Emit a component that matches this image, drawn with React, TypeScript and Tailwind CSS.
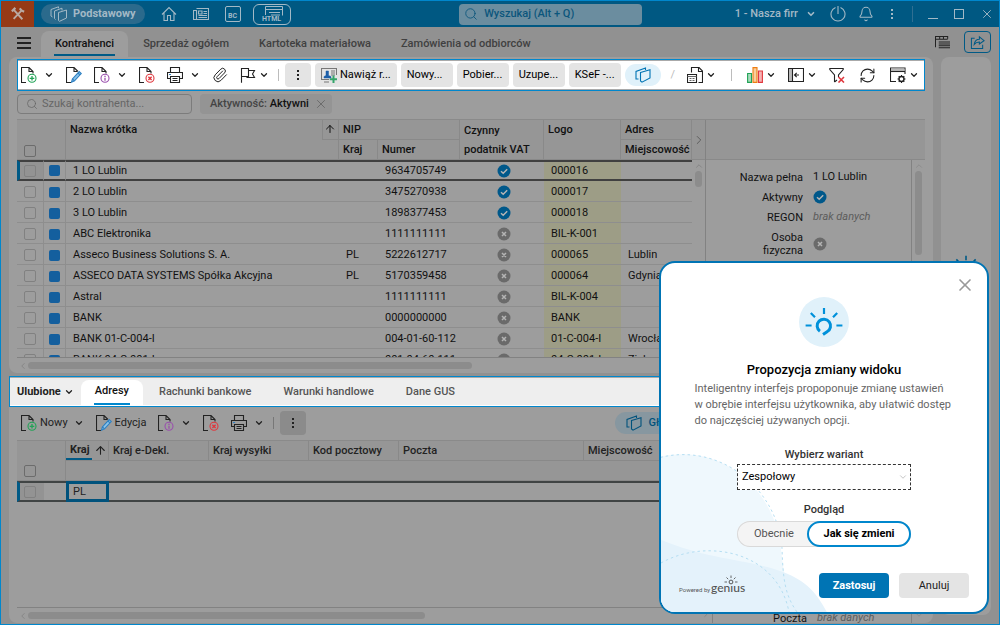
import { useState } from "react";
import type { ReactNode } from "react";
import {
  ArrowUp,
  Bell,
  ChevronDown,
  ChevronLeft,
  ChevronRight,
  ChevronUp,
  Paperclip,
  RefreshCw,
  Search,
  X,
} from "lucide-react";
import clsx from "clsx";

type Contractor = {
  name: string;
  country?: string;
  nip: string;
  vat: boolean;
  logo: string;
  city?: string;
};

const contractors: Contractor[] = [
  { name: "1 LO Lublin", nip: "9634705749", vat: true, logo: "000016" },
  { name: "2 LO Lublin", nip: "3475270938", vat: true, logo: "000017" },
  { name: "3 LO Lublin", nip: "1898377453", vat: true, logo: "000018" },
  { name: "ABC Elektronika", nip: "1111111111", vat: false, logo: "BIL-K-001" },
  { name: "Asseco Business Solutions S. A.", country: "PL", nip: "5222612717", vat: false, logo: "000065", city: "Lublin" },
  { name: "ASSECO DATA SYSTEMS Spółka Akcyjna", country: "PL", nip: "5170359458", vat: false, logo: "000064", city: "Gdynia" },
  { name: "Astral", nip: "1111111111", vat: false, logo: "BIL-K-004" },
  { name: "BANK", nip: "0000000000", vat: false, logo: "BANK" },
  { name: "BANK 01-C-004-I", nip: "004-01-60-112", vat: false, logo: "01-C-004-I", city: "Wrocław" },
  { name: "BANK 04-C-001-I", nip: "001-04-60-111", vat: false, logo: "04-C-001-I", city: "Zielona Góra" },
];

const mainTabs = ["Kontrahenci", "Sprzedaż ogółem", "Kartoteka materiałowa", "Zamówienia od odbiorców"];
const detailTabs = ["Adresy", "Rachunki bankowe", "Warunki handlowe", "Dane GUS"];

/* ---------- icons ---------- */

function Icon({ children, size = "size-4" }: { children: ReactNode; size?: string }) {
  return (
    <svg viewBox="0 0 16 16" className={clsx("shrink-0", size)} fill="none" stroke="currentColor" strokeWidth="1.1" aria-hidden="true">
      {children}
    </svg>
  );
}

const docOutline = "M5 15.5H.5V.5H8L12 4.5V6.5M8 .5V4.5H12";

function NewDocIcon() {
  return (
    <Icon>
      <path d={docOutline} />
      <g className="stroke-[#21a356]">
        <circle cx="11" cy="11.3" r="4" />
        <path d="M11 9V13.6M8.7 11.3H13.3" strokeWidth="1.3" />
      </g>
    </Icon>
  );
}

function EditIcon() {
  return (
    <Icon>
      <path d="M5 15.5H.5V.5H8L12 4.5M8 .5V4.5H11" />
      <path d="M5.5 15.2L6.4 12L13.2 4.6L15.3 6.5L8.5 13.9Z" className="fill-[#8cc4ea] stroke-[#2d7fc1]" />
      <path d="M6.4 12L8.5 13.9M11.9 6L14 7.9" className="stroke-[#2d7fc1]" />
    </Icon>
  );
}

function InfoDocIcon() {
  return (
    <Icon>
      <path d={docOutline} />
      <g className="stroke-[#9a4fae]">
        <circle cx="11" cy="11.3" r="4" />
        <path d="M11 10.7V13.7M11 8.8V9.9" strokeWidth="1.3" />
      </g>
    </Icon>
  );
}

function DeleteDocIcon() {
  return (
    <Icon>
      <path d={docOutline} />
      <g className="stroke-[#e0383e]">
        <circle cx="11" cy="11.3" r="4" />
        <path d="M9.4 9.7L12.6 12.9M12.6 9.7L9.4 12.9" strokeWidth="1.4" />
      </g>
    </Icon>
  );
}

function PrinterIcon() {
  return (
    <Icon>
      <path d="M3.5 5.5V.5H12.5V5.5M3.5 11.5H.5V5.5H15.5V11.5H12.5M3.5 9.5H12.5V15.5H3.5ZM5.5 11.5H10.5M5.5 13.5H10.5" />
      <path d="M2 7.5H4" className="stroke-[#2d7fc1]" />
    </Icon>
  );
}

function FlagIcon() {
  return (
    <Icon>
      <path d="M1.5 15.8V1.500H8.5V9.5H1.5M8.5 3.5H14.5L12.5 7L14.5 10.5H7V9.5" />
    </Icon>
  );
}

function ViewsIcon() {
  return (
    <Icon>
      <path d="M5.500 5.500L15 2.800V11L7 15.200L5.500 14Z" />
      <path d="M3.500 12H1V4.500L10.500 1V3" />
    </Icon>
  );
}

function StackIcon() {
  return (
    <svg viewBox="0 0 18 16" className="h-4 w-[18px]" fill="none" stroke="currentColor" aria-hidden="true">
      <path d="M8.5 6.500L16.500 4V12L9.500 15.300L8.500 14.500ZM5.500 13.500L4.500 12.500V5L12 2.200V4.500M2.500 11L1 10V3.500L8.500.8V2.300" />
    </svg>
  );
}

function ReportIcon() {
  return (
    <Icon>
      <path d="M4.500 5.500V.5H12L15.500 4V15.500H11.500M11.500 .5V4.500H15.500" />
      <path d="M.5 7.500H9.500V15.500H.5Z" />
      <path d="M.5 9.500H9.500M2.500 11.500H4.500M5.500 11.500H7.500M2.500 13.500H4.500M5.500 13.500H7.500" className="stroke-[#666]" />
    </Icon>
  );
}

function ChartIcon() {
  return (
    <Icon>
      <path d="M.6 6.500H4.500V15.400H.6Z" className="fill-[#a9dbbd] stroke-[#21a356]" />
      <path d="M6 .6H10V15.400H6Z" className="fill-[#f9cf9d] stroke-[#ee7d11]" />
      <path d="M11.500 4H15.400V15.400H11.500Z" className="fill-[#f6b3b5] stroke-[#e0383e]" />
    </Icon>
  );
}

function PanelIcon() {
  return (
    <Icon>
      <path d="M.5 1.500H15.500V14.500H.5Z" />
      <path d="M1 2H4V14H1Z" className="fill-[#bbb] stroke-none" />
      <path d="M4.500 1.500V14.500M6.500 8H11M8.700 5.800L6.500 8L8.700 10.200" />
    </Icon>
  );
}

function FilterOffIcon() {
  return (
    <Icon>
      <path d="M5.500 15V8L.8 2.500V1.500H14.200V2.500L9.500 8V10M5.500 15L8 13" />
      <path d="M9.500 10L15 15.500M15 10L9.500 15.500" className="stroke-[#e0383e]" strokeWidth="1.6" />
    </Icon>
  );
}

function WindowGearIcon() {
  return (
    <Icon>
      <path d="M6 14.500H.5V1H15V7" />
      <path d="M1 1.500H14.500V4H1Z" className="fill-[#bbb] stroke-none" />
      <path d="M.5 4.500H15" />
      <circle cx="11.5" cy="12" r="2.500" strokeWidth="1.4" />
      <path d="M11.500 8V9.500M11.500 14.500V16M7.500 12H9M14 12H15.500M8.700 9.200L9.700 10.200M13.300 13.800L14.300 14.800M14.300 9.200L13.300 10.200M9.700 13.800L8.700 14.800" />
    </Icon>
  );
}

function DotsIcon() {
  return (
    <svg viewBox="0 0 4 14" className="h-[14px] w-1" fill="currentColor" aria-hidden="true">
      <path d="M1 2H3V4H1ZM1 6H3V8H1ZM1 10H3V12H1Z" />
    </svg>
  );
}

function RelateIcon() {
  return (
    <Icon>
      <path d="M15.500 8V1.500H.5V12.500H8M3 15H8M10 4H14M10 6H14M10 8H14" className="stroke-[#777]" />
      <path d="M3 11V9.500L5 8.500V4H7.500V8.500L10 9.500V11Z" className="fill-[#1d5fa8] stroke-[#1d5fa8]" strokeWidth=".5" />
      <path d="M12.500 8.500V16M8.800 12.300H16" className="stroke-[#35a56b]" strokeWidth="2" />
    </Icon>
  );
}

function GeniusIcon({ className }: { className?: string }) {
  return (
    <svg viewBox="0 0 38 30" className={className} fill="none" stroke="currentColor" aria-hidden="true">
      <path d="M19 1V7M5.800 6L10 10.300M32.200 6L28 10.300M.6 18.500H6.600M31.400 18.500H37.400" strokeWidth="2.2" />
      <path d="M14.900 24.300A6.700 6.700 0 1 1 22 24.800L18 27.500" strokeWidth="3" />
    </svg>
  );
}

function StatusIcon({ ok }: { ok: boolean }) {
  return (
    <svg viewBox="0 0 14 14" className="inline-block size-[14px]" role="img" aria-label={ok ? "Tak" : "Nie"}>
      <circle cx="7" cy="7" r="6.5" className={ok ? "fill-[#00588a]" : "fill-[#6a6a6a]"} />
      <path
        d={ok ? "M4 7.200L6.200 9.300L10.200 5.200" : "M5 5L9 9M9 5L5 9"}
        fill="none"
        strokeWidth="1.5"
        className="stroke-[#b4b4b4]"
      />
    </svg>
  );
}

/* ---------- small parts ---------- */

type ToolProps = { label: string; icon: ReactNode; text?: string; split?: boolean; tight?: boolean };

function Tool({ label, icon, text, split, tight }: ToolProps) {
  return (
    <button
      type="button"
      aria-label={label}
      className={clsx(
        "flex h-6 shrink-0 items-center pl-[3px]",
        tight || text ? "gap-[3px]" : "gap-[7px]",
        split || text ? "pr-[9px]" : tight ? "pr-[11px]" : "pr-[9px]",
      )}
    >
      {icon}
      {text && <span>{text}</span>}
      {split && <ChevronDown className={clsx("size-[10px] shrink-0", text && "ml-[3px]")} strokeWidth={3} />}
    </button>
  );
}

function Divider() {
  return <span className="h-3 w-px shrink-0 bg-current opacity-30" />;
}

function ChipButton({ children, icon }: { children: ReactNode; icon?: ReactNode }) {
  return (
    <button type="button" className="flex h-6 min-w-[52px] shrink-0 items-center gap-[3px] rounded bg-[#e4e4e4] px-[6px] text-black">
      {icon}
      {children}
    </button>
  );
}

function Check({ label, dark }: { label: string; dark?: boolean }) {
  return (
    <input
      type="checkbox"
      aria-label={label}
      className={clsx("block size-3 appearance-none rounded-[2px] border", dark ? "border-[#6c6c6c]" : "border-[#818181]")}
    />
  );
}

function HorizontalScroll({ thumb }: { thumb: string }) {
  return (
    <div className="flex h-4 shrink-0 items-center border-t border-[#828282] pl-px text-[#828282]">
      <ChevronLeft className="size-[10px]" />
      <div className={clsx("h-[7px] rounded-full bg-[#8c8c8c]", thumb)} />
    </div>
  );
}

function Detail({ label, children }: { label: string; children: ReactNode }) {
  return (
    <div className="flex min-h-5 items-center gap-[10px]">
      <dt className="w-[74px] text-right leading-[13px]">{label}</dt>
      <dd className="flex items-center whitespace-nowrap">{children}</dd>
    </div>
  );
}

const th = "border-r border-b border-[#898989] bg-[#969696] pl-1 text-left font-medium whitespace-nowrap";

/* ---------- sections ---------- */

function TitleBar() {
  return (
    <header className="flex h-[26px] shrink-0 items-center bg-[#005882] text-[#a3b9c6]">
      <button type="button" aria-label="Narzędzia" className="flex h-full w-[33px] items-center justify-center bg-[#963a16] text-[#b9a9a2]">
        <Icon size="size-[14px]">
          <path d="M3 3L13 14M12.500 3.500L3 13.500" strokeWidth="2.2" />
          <path d="M1 5L5 1M10 1.500L12 4L15 5.500" strokeWidth="2.5" />
        </Icon>
      </button>
      <button type="button" className="ml-[7px] flex h-5 items-center gap-[5px] rounded-full bg-[#2b6a8c] px-[9px] text-[11px] font-bold">
        <StackIcon />
        Podstawowy
      </button>
      <nav className="ml-4 flex items-center gap-4">
        <button type="button" aria-label="Start">
          <Icon>
            <path d="M1 8.500L8 1.500L15 8.500M3 7V14.500H6.500V9.500H9.500V14.500H13V7" />
          </Icon>
        </button>
        <button type="button" aria-label="Aktualności">
          <Icon>
            <path d="M3.500 2.500H15.500V13.500H.5V4.500H3.500V13.500M5.500 5H9V8H5.500ZM10.500 5.500H14M10.500 7.500H14M5.500 9.500H14M5.500 11.500H14" />
          </Icon>
        </button>
        <button type="button" aria-label="BC" className="flex size-4 items-end justify-center rounded-[2px] border border-current pb-px text-[7px] leading-[7px] font-bold">
          BC
        </button>
      </nav>
      <button type="button" className="ml-3 flex h-[21px] w-[38px] flex-col items-center rounded-md border border-current pt-px text-[7px] leading-[7px] font-bold">
        <svg viewBox="0 0 18 10" className="ml-1 h-[10px] w-[18px]" fill="none" stroke="currentColor" aria-hidden="true">
          <path d="M.5 9V.5H17.500V9.500M.5 3.500H17.500M4 6.500H15M6 9H15" />
        </svg>
        HTML
      </button>
      <div className="flex flex-1 justify-center pl-[76px]">
        <label className="flex h-[21px] w-[183px] items-center gap-[6px] rounded bg-[#6b8d9f] px-[5px] text-[#0b567c]">
          <Search className="size-[14px] shrink-0" strokeWidth={1.5} />
          <input
            type="search"
            aria-label="Wyszukaj"
            placeholder="Wyszukaj (Alt + Q)"
            className="w-full bg-transparent text-[11px] font-medium outline-none placeholder:text-[#0b567c]"
          />
        </label>
      </div>
      <button type="button" className="flex items-center gap-2 text-[11px] font-medium">
        1 - Nasza firr
        <ChevronDown className="size-[10px]" strokeWidth={4} />
      </button>
      <div className="ml-[14px] flex items-center gap-3">
        <button type="button" aria-label="Wyloguj">
          <Icon>
            <path d="M5.500 1.500A7 7 0 1 0 10.500 1.500M8 0V8" />
          </Icon>
        </button>
        <button type="button" aria-label="Powiadomienia">
          <Bell className="size-4" strokeWidth={1.6} />
        </button>
        <button type="button" aria-label="Więcej" className="px-1">
          <DotsIcon />
        </button>
      </div>
      <span className="ml-[14px] h-4 w-px bg-[#2f6f92]" />
      <div className="mr-[5px] ml-[15px] flex items-center gap-4">
        <button type="button" aria-label="Minimalizuj" className="h-[10px] w-[10px] border-b border-current" />
        <button type="button" aria-label="Maksymalizuj" className="size-[10px] border border-current" />
        <button type="button" aria-label="Zamknij">
          <X className="size-[14px]" strokeWidth={1.6} />
        </button>
      </div>
    </header>
  );
}

function MainTabs() {
  return (
    <div className="flex h-[30px] shrink-0 items-end pl-4 text-[#404040]">
      <button type="button" aria-label="Menu" className="mb-2 flex w-[14px] flex-col gap-[2px]">
        <span className="h-[2px] bg-[#222]" />
        <span className="mt-px h-[2px] bg-[#222]" />
        <span className="mt-px h-[2px] bg-[#222]" />
      </button>
      <nav className="ml-[10px] flex h-[26px] items-stretch">
        {mainTabs.map((tab, i) => (
          <button
            key={tab}
            type="button"
            className={clsx("font-medium", i === 0 ? "rounded-t-lg bg-[#9d9d9d] px-[13px] text-[#111]" : "px-[14px]")}
          >
            <span className={clsx("block px-px", i === 0 && "border-b-2 border-[#005a86] pt-1 pb-[2px]")}>{tab}</span>
          </button>
        ))}
      </nav>
      <div className="mr-2 mb-1 ml-auto flex items-center gap-[14px]">
        <button type="button" aria-label="Drzewo" className="text-[#222]">
          <Icon size="size-[15px]">
            <path d="M.5 13V1.500H13.500V4M.5 4.500H13.500M5 1.500V4M9 1.500V4M4 7.500H16M4 9.500H16M4 11.500H16M4 13.500H16" />
          </Icon>
        </button>
        <button type="button" aria-label="Udostępnij" className="flex h-[22px] w-[27px] items-center justify-center rounded border border-[#005a86] text-[#005a86]">
          <Icon size="size-[15px]">
            <path d="M5 3.500H1.500V14.500H13.500V10.500M4.500 10C5 6 7.500 4.500 10 4.500V2L15 6L10 9.500V7.500C7.500 7.500 6 8 4.500 10Z" />
          </Icon>
        </button>
      </div>
    </div>
  );
}

function MainToolbar() {
  return (
    <div className="flex h-8 shrink-0 items-center border border-[#0087cd] bg-white text-[#222] shadow-[inset_0_1px_0_#aaa,inset_0_-1px_0_#aaa]">
      <Tool label="Nowy" icon={<NewDocIcon />} split />
      <Tool label="Edycja" icon={<EditIcon />} />
      <Tool label="Informacje" icon={<InfoDocIcon />} split />
      <Tool label="Usuń" icon={<DeleteDocIcon />} />
      <Tool label="Drukuj" icon={<PrinterIcon />} split />
      <Tool label="Załączniki" icon={<Paperclip className="size-4" strokeWidth={1.5} />} />
      <Tool label="Oznacz" icon={<FlagIcon />} split tight />
      <Divider />
      <div className="ml-[6px] flex gap-1">
        <button type="button" aria-label="Więcej" className="flex h-6 w-[26px] items-center justify-center rounded bg-[#e4e4e4]">
          <DotsIcon />
        </button>
        <ChipButton icon={<RelateIcon />}>Nawiąż r...</ChipButton>
        <ChipButton>Nowy...</ChipButton>
        <ChipButton>Pobier...</ChipButton>
        <ChipButton>Uzupe...</ChipButton>
        <ChipButton>KSeF -...</ChipButton>
        <button type="button" aria-label="Widoki" className="flex h-[22px] w-9 items-center justify-center self-center rounded-full bg-[#e0f1fa] text-[#0074b4]">
          <ViewsIcon />
        </button>
      </div>
      <div className="-mr-1 ml-auto flex items-center">
        <span className="mr-[9px] text-[#bbb]">/</span>
        <Tool label="Raporty" icon={<ReportIcon />} split tight />
        <span className="mr-3 ml-[6px] flex">
          <Divider />
        </span>
        <Tool label="Wykres" icon={<ChartIcon />} split tight />
        <Tool label="Panel" icon={<PanelIcon />} split tight />
        <Tool label="Wyczyść filtr" icon={<FilterOffIcon />} tight />
        <Tool label="Odśwież" icon={<RefreshCw className="size-[17px]" strokeWidth={1.5} />} tight />
        <Tool label="Ustawienia okna" icon={<WindowGearIcon />} split tight />
      </div>
    </div>
  );
}

function ContractorRow({ contractor: c, selected }: { contractor: Contractor; selected: boolean }) {
  const cell = clsx(
    "whitespace-nowrap",
    selected ? "border-y-2 border-y-[#404040]" : "border-b border-b-[#8e8e8e] pt-[2px]",
  );
  return (
    <tr className="h-[21px]">
      <td
        className={clsx(
          cell,
          "border-r border-r-[#8e8e8e]",
          selected ? "border-l-[3px] border-l-[#005a86] bg-[#939393] pl-1" : "pl-[7px]",
        )}
      >
        <Check label={c.name} />
      </td>
      <td className={clsx(cell, "border-r border-r-[#8e8e8e] pl-[5px]")}>
        <span className="block size-[11px] rounded-[2px] bg-[#145f9e]" />
      </td>
      <td className={clsx(cell, "pl-[7px]")}>{c.name}</td>
      <td className={clsx(cell, "pl-[7px]")}>{c.country}</td>
      <td className={clsx(cell, "pl-[7px]")}>{c.nip}</td>
      <td className={clsx(cell, "pl-[3px]")}>
        <span className="flex justify-center">
          <StatusIcon ok={c.vat} />
        </span>
      </td>
      <td className={clsx(cell, "bg-[#9d9d86] pl-[7px]")}>{c.logo}</td>
      <td className={clsx(cell, "overflow-hidden pl-[7px]")}>{c.city}</td>
    </tr>
  );
}

function ContractorsTable() {
  return (
    <table className="w-full table-fixed border-separate border-spacing-0 text-[#111]">
      <colgroup>
        <col className="w-[27px]" />
        <col className="w-[22px]" />
        <col />
        <col className="w-[39px]" />
        <col className="w-[82px]" />
        <col className="w-[84px]" />
        <col className="w-[77px]" />
        <col className="w-[71px]" />
      </colgroup>
      <thead>
        <tr className="h-5">
          <th rowSpan={2} className="border-b border-[#898989] bg-[#969696] pb-[2px] pl-[7px] align-bottom">
            <Check label="Zaznacz wszystko" dark />
          </th>
          <th rowSpan={2} className={th} />
          <th rowSpan={2} className={clsx(th, "align-top")}>
            <div className="flex h-[19px] items-center justify-between">
              Nazwa krótka
              <span className="flex h-5 w-4 shrink-0 items-center justify-center border-b border-l border-[#898989]">
                <ArrowUp className="size-3" />
              </span>
            </div>
          </th>
          <th colSpan={2} className={th}>NIP</th>
          <th rowSpan={2} className={clsx(th, "leading-[19px]")}>
            Czynny
            <br />
            podatnik VAT
          </th>
          <th rowSpan={2} className={clsx(th, "align-top leading-[19px]")}>Logo</th>
          <th className={th}>Adres</th>
        </tr>
        <tr className="h-5">
          <th className={th}>Kraj</th>
          <th className={th}>Numer</th>
          <th className={clsx(th, "overflow-hidden")}>Miejscowość</th>
        </tr>
      </thead>
      <tbody>
        {contractors.map((c, i) => (
          <ContractorRow key={c.name} contractor={c} selected={i === 0} />
        ))}
      </tbody>
    </table>
  );
}

function ContractorsPanel() {
  return (
    <section className="flex min-h-0 grow-[314] basis-0 flex-col rounded-lg bg-[#9d9d9d] px-2 pt-[2px]">
      <MainToolbar />
      <div className="mt-[3px] flex h-5 shrink-0 items-center gap-2">
        <label className="flex h-full w-[175px] items-center gap-1 rounded border border-[#7c7c7c] px-2 text-[#666]">
          <Search className="size-3 shrink-0" strokeWidth={1.5} />
          <input type="search" aria-label="Szukaj kontrahenta" placeholder="Szukaj kontrahenta..." className="w-full bg-transparent outline-none placeholder:text-[#666]" />
        </label>
        <span className="flex h-5 items-center rounded bg-[#949494] pr-1 pl-[10px] font-medium text-[#444]">
          Aktywność:&nbsp;<b className="font-medium text-[#111]">Aktywni</b>
          <button type="button" aria-label="Usuń filtr" className="ml-[5px] text-[#666]">
            <X className="size-[14px]" strokeWidth={1.5} />
          </button>
        </span>
      </div>
      <div className="mt-[5px] flex min-h-0 flex-1 border-t border-[#8a8a8a]">
        <div className="flex min-w-0 flex-1 flex-col">
          <div className="min-h-0 flex-1 overflow-hidden">
            <ContractorsTable />
          </div>
          <HorizontalScroll thumb="w-[444px]" />
        </div>
        <div className="flex w-[14px] shrink-0 flex-col items-center border-r border-[#828282] text-[#777]">
          <button type="button" aria-label="Zwiń szczegóły" className="flex h-10 w-full shrink-0 items-center justify-center border-b border-[#898989] bg-[#969696] text-[#555]">
            <ChevronRight className="size-[14px] shrink-0" strokeWidth={1.5} />
          </button>
          <ChevronUp className="mt-px size-[10px] shrink-0" strokeWidth={1.5} />
          <div className="h-4 w-[7px] rounded-full bg-[#8c8c8c]" />
        </div>
        <div className="flex w-[219px] shrink-0 flex-col">
          <div className="h-10 shrink-0 border-b border-[#898989] bg-[#969696]" />
          <div className="flex min-h-0 flex-1">
            <dl className="flex flex-1 flex-col pt-[7px] pl-[23px] text-[#111]">
              <Detail label="Nazwa pełna">1 LO Lublin</Detail>
              <Detail label="Aktywny">
                <StatusIcon ok />
              </Detail>
              <Detail label="REGON">
                <i className="text-[#5c5c5c]">brak danych</i>
              </Detail>
              <div className="pt-1">
                <Detail label="Osoba fizyczna">
                  <StatusIcon ok={false} />
                </Detail>
              </div>
            </dl>
            <div className="flex w-[14px] flex-col items-center border-l border-[#828282] text-[#828282]">
              <ChevronUp className="mt-px size-[10px]" strokeWidth={1.5} />
              <div className="h-[84px] w-[7px] rounded-full bg-[#8c8c8c]" />
            </div>
          </div>
        </div>
      </div>
    </section>
  );
}

function AddressTable() {
  const blank = "h-5 border-b border-[#898989] bg-[#969696]";
  const row = "border-y-2 border-[#404444]";
  return (
    <table className="w-full table-fixed border-separate border-spacing-0 text-[#222]">
      <colgroup>
        <col className="w-[27px]" />
        <col className="w-[22px]" />
        <col className="w-[43px]" />
        <col className="w-[100px]" />
        <col className="w-[100px]" />
        <col className="w-[90px]" />
        <col className="w-[185px]" />
        <col />
      </colgroup>
      <thead>
        <tr className="h-5">
          <th colSpan={2} className="border-r border-[#898989] bg-[#969696]" />
          <th className={th}>
            <div className="flex h-[19px] items-center">
              <span className="-ml-1 flex h-[19px] items-center border-b-2 border-[#005a86] pr-[2px] pl-1 font-bold">Kraj</span>
              <ArrowUp className="ml-[2px] size-[13px] shrink-0" />
            </div>
          </th>
          <th className={th}>Kraj e-Dekl.</th>
          <th className={th}>Kraj wysyłki</th>
          <th className={th}>Kod pocztowy</th>
          <th className={th}>Poczta</th>
          <th className={th}>Miejscowość</th>
        </tr>
        <tr>
          <th colSpan={2} className={clsx(blank, "border-r pl-[7px]")}>
            <Check label="Zaznacz wszystkie adresy" dark />
          </th>
          <th colSpan={6} className={blank} />
        </tr>
      </thead>
      <tbody>
        <tr className="h-[21px]">
          <td className={clsx(row, "border-l-[3px] border-l-[#005a86] bg-[#939393] pl-1")}>
            <Check label="PL" />
          </td>
          <td className={row} />
          <td className="border-[3px] border-[#00527c] pl-1 leading-[15px]">PL</td>
          <td colSpan={5} className={row} />
        </tr>
      </tbody>
    </table>
  );
}

function AddressPanel() {
  return (
    <section className="flex min-h-0 grow-[247] basis-0 flex-col rounded-b-lg bg-[#9d9d9d]">
      <div className="flex h-[31px] shrink-0 items-end border border-[#0087cd] bg-[#eeeeee] pl-[7px] font-medium text-[#555] shadow-[inset_0_1px_0_#aaa,inset_0_-1px_0_#fff]">
        <button type="button" className="mb-[6px] flex items-center gap-[3px] font-bold text-[#222]">
          Ulubione
          <ChevronDown className="size-[10px]" strokeWidth={3} />
        </button>
        <nav className="ml-[7px] flex h-[26px] items-stretch">
          {detailTabs.map((tab, i) => (
            <button key={tab} type="button" className={i === 0 ? "rounded-t-lg bg-white px-[13px] text-[#111]" : "px-[15px] pb-[2px]"}>
              <span className={clsx("block px-px", i === 0 && "border-b-2 border-[#0087cd] pt-[2px] pb-1")}>{tab}</span>
            </button>
          ))}
        </nav>
      </div>
      <div className="flex min-h-0 flex-1 flex-col px-2">
        <div className="flex h-[33px] shrink-0 items-center pb-px pl-px text-[#222]">
          <Tool label="Nowy" icon={<NewDocIcon />} text="Nowy" split />
          <Tool label="Edycja" icon={<EditIcon />} text="Edycja" />
          <Tool label="Informacje" icon={<InfoDocIcon />} split />
          <Tool label="Usuń" icon={<DeleteDocIcon />} />
          <Tool label="Drukuj" icon={<PrinterIcon />} split />
          <Divider />
          <button type="button" aria-label="Więcej" className="ml-[6px] flex h-6 w-[26px] items-center justify-center rounded bg-[#8b8b8b]">
            <DotsIcon />
          </button>
          <button type="button" className="mr-[229px] ml-auto flex h-[22px] items-center gap-[6px] rounded-full bg-[#8797a0] px-[11px] font-medium text-[#00527c]">
            <ViewsIcon />
            Główny
          </button>
        </div>
        <div className="flex min-h-0 flex-1 border-t border-[#8a8a8a]">
          <div className="flex min-w-0 flex-1 flex-col">
            <div className="min-h-0 flex-1 overflow-hidden">
              <AddressTable />
            </div>
            <HorizontalScroll thumb="w-[397px]" />
          </div>
          <div className="flex w-[14px] shrink-0 flex-col items-center justify-end border-r border-[#828282] text-[#777]">
            <ChevronRight className="mb-1 size-[10px]" strokeWidth={1.5} />
          </div>
          <div className="flex w-[212px] shrink-0 overflow-hidden">
            <dl className="flex flex-1 flex-col justify-end pl-5 text-[#111]">
              <div className="-mb-[5px]">
                <Detail label="Poczta">
                  <i className="text-[#5c5c5c]">brak danych</i>
                </Detail>
              </div>
            </dl>
            <div className="flex w-[14px] flex-col items-center justify-end border-l border-[#828282] text-[#828282]">
              <ChevronDown className="mb-[3px] size-[10px]" strokeWidth={1.5} />
            </div>
          </div>
        </div>
      </div>
    </section>
  );
}

function GeniusDialog() {
  const [preview, setPreview] = useState<"now" | "after">("after");

  return (
    <div
      role="dialog"
      aria-labelledby="genius-title"
      className="absolute right-[10px] bottom-[10px] flex w-[330px] flex-col items-center overflow-hidden rounded-2xl border-2 border-[#0074b4] bg-white pt-[34px]"
    >
      <svg viewBox="6 20 174 162" className="absolute bottom-0 left-0 h-[162px] w-[174px]" fill="none" aria-hidden="true">
        <path d="M0 28C60 12 110 50 124 105C128 125 126 160 150 190H0Z" className="fill-[#eff8fd]" />
        <path d="M0 107C50 130 90 128 128 142C155 152 165 168 176 190H0Z" className="fill-[#e4f2fb]" />
        <g className="stroke-[#b5def2]" strokeDasharray="2.5 3">
          <path d="M0 29C60 10 122 55 127 118C128 150 130 165 142 182" />
          <path d="M6 133C50 108 122 120 134 182" />
        </g>
      </svg>

      <button type="button" aria-label="Zamknij" className="absolute top-[12px] right-[12px] text-[#999]">
        <X className="size-5" strokeWidth={2} />
      </button>

      <div className="flex size-[50px] items-center justify-center rounded-full bg-[#e0f1fa] text-[#0091da]">
        <GeniusIcon className="h-[30px] w-[38px]" />
      </div>
      <h2 id="genius-title" className="mt-[13px] text-[13px] leading-5 font-medium text-black">
        Propozycja zmiany widoku
      </h2>
      <p className="relative mt-px w-[259px] leading-4 whitespace-nowrap text-[#666]">
        Inteligentny interfejs propoponuje zmianę ustawień
        <br />
        w obrębie interfejsu użytkownika, aby ułatwić dostęp
        <br />
        do najczęściej używanych opcji.
      </p>

      <div className="relative mt-[18px] flex w-[174px] flex-col items-center text-[#333]">
        <label htmlFor="variant" className="leading-4 font-medium">Wybierz wariant</label>
        <div className="relative mt-px w-full">
          <select id="variant" className="block h-[26px] w-full appearance-none border border-dashed border-[#333] bg-white pl-1 text-black">
            <option>Zespołowy</option>
          </select>
          <ChevronDown className="absolute top-2 right-[3px] size-[10px] text-[#bbb]" strokeWidth={2} />
        </div>
        <span className="mt-3 leading-4 font-medium">Podgląd</span>
        <div className="mt-[3px] flex h-[26px] w-full rounded-full bg-[#f4f4f4] shadow-[inset_0_0_0_1px_#d9d9d9]">
          <button
            type="button"
            aria-pressed={preview === "now"}
            onClick={() => setPreview("now")}
            className={clsx("flex-1 rounded-full pl-1", preview === "now" ? "border-2 border-[#0087cd] bg-white font-bold text-black" : "text-[#555]")}
          >
            Obecnie
          </button>
          <button
            type="button"
            aria-pressed={preview === "after"}
            onClick={() => setPreview("after")}
            className={clsx("w-[104px] rounded-full", preview === "after" ? "border-2 border-[#0087cd] bg-white font-bold text-black" : "text-[#555]")}
          >
            Jak się zmieni
          </button>
        </div>
      </div>

      <div className="relative mt-[26px] flex w-full items-end justify-between pr-[18px] pb-[14px] pl-[18px]">
        <div className="flex items-baseline gap-px text-[#555]">
          <span className="text-[6px]">Powered by</span>
          <span className="relative font-[Lato] text-xs leading-[11px] font-medium">
            genıus
            <svg viewBox="0 0 14 10" className="absolute -top-[7px] left-[13px] h-[10px] w-[14px]" fill="none" stroke="currentColor" aria-hidden="true">
              <circle cx="7" cy="7" r="1.9" />
              <path d="M7 .5V3M2.500 2.500L4.200 4.200M11.500 2.500L9.800 4.200M.5 7H3M11 7H13.500" strokeWidth=".9" />
            </svg>
          </span>
        </div>
        <div className="flex gap-[10px]">
          <button type="button" className="h-[25px] w-[70px] rounded bg-[#0074b4] font-bold text-white">Zastosuj</button>
          <button type="button" className="h-[25px] w-[70px] rounded bg-[#e4e4e4] text-[#222]">Anuluj</button>
        </div>
      </div>
    </div>
  );
}

export default function App() {
  return (
    <div className="relative flex h-screen flex-col overflow-hidden border border-[#0087cd] bg-[#919191] font-[Roboto,sans-serif] text-[11px] leading-4">
      <TitleBar />
      <MainTabs />
      <div className="flex min-h-0 flex-1 gap-2 px-2 pb-px">
        <main className="flex min-w-0 flex-1 flex-col gap-[3px]">
          <ContractorsPanel />
          <AddressPanel />
        </main>
        <aside className="mb-2 flex w-[50px] shrink-0 flex-col items-center rounded-lg bg-[#9d9d9d] pt-[198px] text-[#005a86]">
          <GeniusIcon className="h-[22px] w-7" />
        </aside>
      </div>
      <GeniusDialog />
    </div>
  );
}
